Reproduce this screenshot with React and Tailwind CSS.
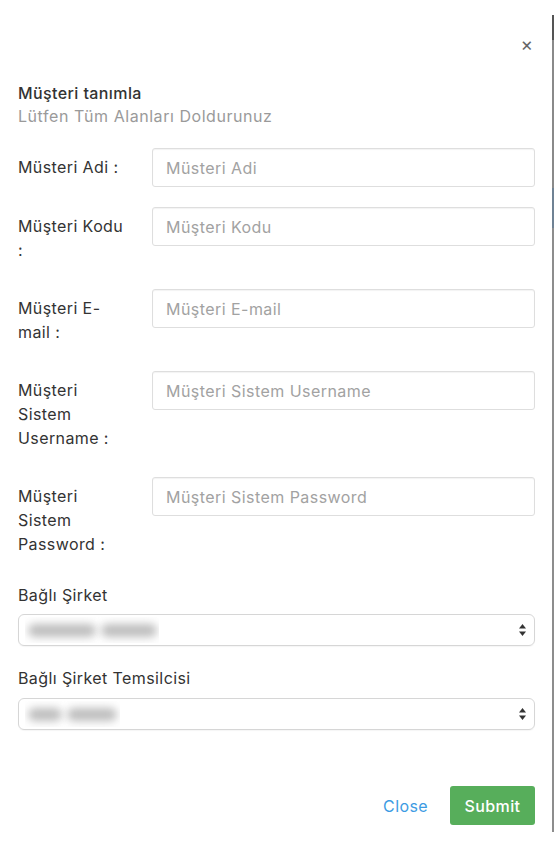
import React from "react";

const font = { fontFamily: "Inter, 'Noto Sans', 'Liberation Sans', sans-serif" };

function Row({ lines, placeholder }) {
  return (
    <div className="flex items-start mb-5">
      <div className="w-[134px] shrink-0 py-[7px] text-[16px] tracking-[0.4px] leading-6 text-[#333]">
        {lines.map((l, i) => (
          <div key={i} className="whitespace-nowrap">{l}</div>
        ))}
      </div>
      <div className="flex-1 h-[39px] border border-[#dedede] rounded-[3px] shadow-[inset_0_1px_1px_rgba(0,0,0,0.05)] flex items-center pl-[13px] text-[16px] tracking-[0.45px] text-[#a2a2a2]">
        {placeholder}
      </div>
    </div>
  );
}

function Arrows() {
  return (
    <svg width="9" height="14" viewBox="0 0 9 14" className="shrink-0">
      <path d="M4.5 1 L8 5.5 L1 5.5 Z" fill="#333" />
      <path d="M4.5 13 L8 8.5 L1 8.5 Z" fill="#333" />
    </svg>
  );
}

function Select({ bars, clipW }) {
  return (
    <div className="h-[32px] border border-[#d6d6d6] rounded-[6px] shadow-[0_1px_1px_rgba(0,0,0,0.04)] flex items-center pl-[6px] pr-[7px]">
      <div className="h-[26px] overflow-hidden flex items-center gap-[5px] pl-[3px]" style={{ width: clipW }}>
        {bars.map((w, i) => (
          <div key={i} className="h-[13px] rounded-full bg-[#bdbdbd] blur-[4px]" style={{ width: w }} />
        ))}
      </div>
      <div className="flex-1" />
      <Arrows />
    </div>
  );
}

export default function App() {
  return (
    <div className="w-[554px] h-[856px] bg-white flex overflow-hidden" style={font}>
      <div className="w-[552px] pl-[18px] pr-[17px]">
        <div className="pt-[34px] h-[56px] flex justify-end pr-[2px]">
          <span className="text-[19px] leading-[22px] text-[#666]">×</span>
        </div>
        <div className="mt-[26px] text-[16px] tracking-[0.4px] leading-[23px] font-medium text-[#333]">Müşteri tanımla</div>
        <div className="text-[16px] tracking-[0.55px] leading-[23px] text-[#9a9a9a]">Lütfen Tüm Alanları Doldurunuz</div>
        <div className="mt-[20px]">
          <Row lines={["Müsteri Adi :"]} placeholder="Müsteri Adi" />
          <Row lines={["Müşteri Kodu", ":"]} placeholder="Müşteri Kodu" />
          <Row lines={["Müşteri E-", "mail :"]} placeholder="Müşteri E-mail" />
          <Row lines={["Müşteri", "Sistem", "Username :"]} placeholder="Müşteri Sistem Username" />
          <Row lines={["Müşteri", "Sistem", "Password :"]} placeholder="Müşteri Sistem Password" />
        </div>
        <div className="text-[16px] tracking-[0.4px] leading-6 text-[#333]">Bağlı Şirket</div>
        <div className="mt-[7px]">
          <Select bars={[68, 56]} clipW={134} />
        </div>
        <div className="mt-[20px] text-[16px] tracking-[0.4px] leading-6 text-[#333]">Bağlı Şirket Temsilcisi</div>
        <div className="mt-[8px]">
          <Select bars={[34, 50]} clipW={95} />
        </div>
        <div className="mt-[56px] flex justify-end items-center">
          <span className="text-[16px] tracking-[0.4px] text-[#3d9be3] mr-[22px]">Close</span>
          <div className="w-[85px] h-[39px] rounded-[3px] bg-[#57ae5b] text-white text-[16px] tracking-[0.4px] font-medium flex items-center justify-center">
            Submit
          </div>
        </div>
      </div>
      <div className="w-[2px] mt-[15px] h-[817px] flex flex-col">
        <div className="h-[25px] bg-[#555]" />
        <div className="h-[148px] bg-[#8a8a8a]" />
        <div className="h-[40px] bg-[#6f8294]" />
        <div className="flex-1 bg-[#8d8d8d]" />
      </div>
    </div>
  );
}
